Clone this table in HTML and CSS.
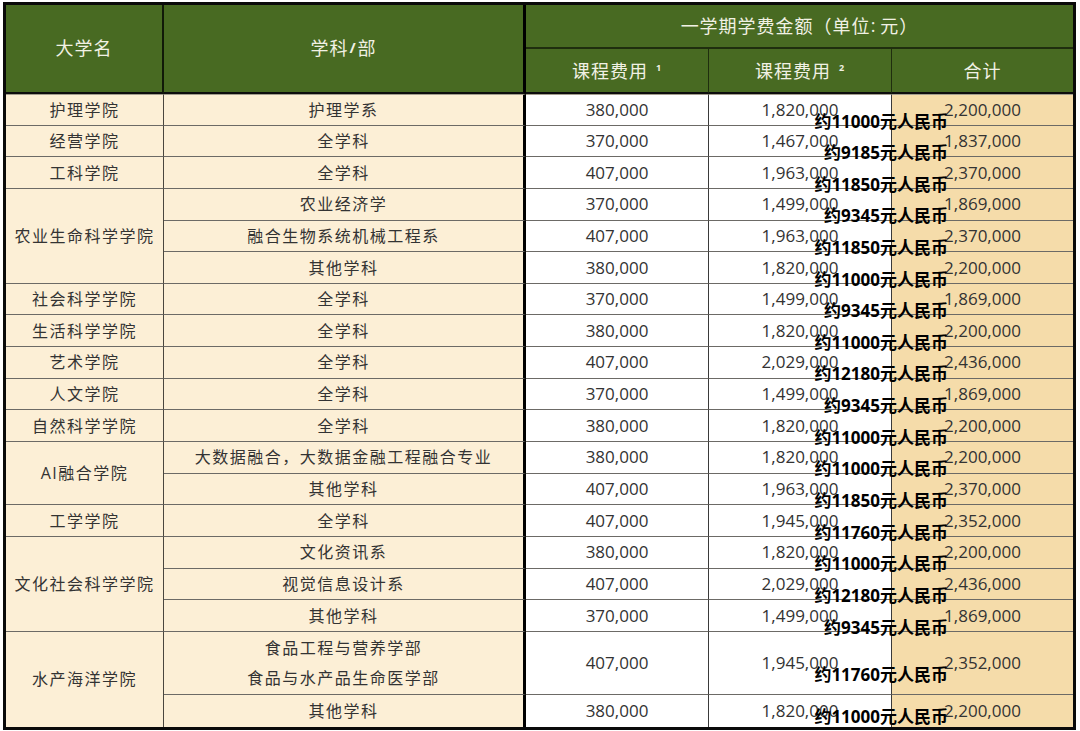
FILE: index.html
```html
<!DOCTYPE html>
<html lang="zh">
<head>
<meta charset="utf-8">
<title>一学期学费金额</title>
<link rel="stylesheet" href="styles.css">
</head>
<body>
<div class="fees">
  <div class="h h-col1 span2r">大学名</div>
  <div class="h h-col2 span2r">学科<span class="slash">/</span>部</div>
  <div class="h h-group">一学期学费金额（单位<span class="colon">:</span> 元）</div>
  <div class="h h-sub">课程费用<sup>1</sup></div>
  <div class="h h-sub">课程费用<sup>2</sup></div>
  <div class="h h-sub last">合计</div>

  <div class="c col1 r1">护理学院</div>
  <div class="c col2 r1">护理学系</div>
  <div class="c col3 r1">380,000</div>
  <div class="c col4 r1">1,820,000<span class="cny">约11000元人民币</span></div>
  <div class="c col5 r1">2,200,000</div>

  <div class="c col1">经营学院</div>
  <div class="c col2">全学科</div>
  <div class="c col3">370,000</div>
  <div class="c col4">1,467,000<span class="cny">约9185元人民币</span></div>
  <div class="c col5">1,837,000</div>

  <div class="c col1">工科学院</div>
  <div class="c col2">全学科</div>
  <div class="c col3">407,000</div>
  <div class="c col4">1,963,000<span class="cny">约11850元人民币</span></div>
  <div class="c col5">2,370,000</div>

  <div class="c col1 span3">农业生命科学学院</div>
  <div class="c col2">农业经济学</div>
  <div class="c col3">370,000</div>
  <div class="c col4">1,499,000<span class="cny">约9345元人民币</span></div>
  <div class="c col5">1,869,000</div>
  <div class="c col2">融合生物系统机械工程系</div>
  <div class="c col3">407,000</div>
  <div class="c col4">1,963,000<span class="cny">约11850元人民币</span></div>
  <div class="c col5">2,370,000</div>
  <div class="c col2">其他学科</div>
  <div class="c col3">380,000</div>
  <div class="c col4">1,820,000<span class="cny">约11000元人民币</span></div>
  <div class="c col5">2,200,000</div>

  <div class="c col1">社会科学学院</div>
  <div class="c col2">全学科</div>
  <div class="c col3">370,000</div>
  <div class="c col4">1,499,000<span class="cny">约9345元人民币</span></div>
  <div class="c col5">1,869,000</div>

  <div class="c col1">生活科学学院</div>
  <div class="c col2">全学科</div>
  <div class="c col3">380,000</div>
  <div class="c col4">1,820,000<span class="cny">约11000元人民币</span></div>
  <div class="c col5">2,200,000</div>

  <div class="c col1">艺术学院</div>
  <div class="c col2">全学科</div>
  <div class="c col3">407,000</div>
  <div class="c col4">2,029,000<span class="cny">约12180元人民币</span></div>
  <div class="c col5">2,436,000</div>

  <div class="c col1">人文学院</div>
  <div class="c col2">全学科</div>
  <div class="c col3">370,000</div>
  <div class="c col4">1,499,000<span class="cny">约9345元人民币</span></div>
  <div class="c col5">1,869,000</div>

  <div class="c col1">自然科学学院</div>
  <div class="c col2">全学科</div>
  <div class="c col3">380,000</div>
  <div class="c col4">1,820,000<span class="cny">约11000元人民币</span></div>
  <div class="c col5">2,200,000</div>

  <div class="c col1 span2">AI融合学院</div>
  <div class="c col2">大数据融合，大数据金融工程融合专业</div>
  <div class="c col3">380,000</div>
  <div class="c col4">1,820,000<span class="cny">约11000元人民币</span></div>
  <div class="c col5">2,200,000</div>
  <div class="c col2">其他学科</div>
  <div class="c col3">407,000</div>
  <div class="c col4">1,963,000<span class="cny">约11850元人民币</span></div>
  <div class="c col5">2,370,000</div>

  <div class="c col1">工学学院</div>
  <div class="c col2">全学科</div>
  <div class="c col3">407,000</div>
  <div class="c col4">1,945,000<span class="cny">约11760元人民币</span></div>
  <div class="c col5">2,352,000</div>

  <div class="c col1 span3">文化社会科学学院</div>
  <div class="c col2">文化资讯系</div>
  <div class="c col3">380,000</div>
  <div class="c col4">1,820,000<span class="cny">约11000元人民币</span></div>
  <div class="c col5">2,200,000</div>
  <div class="c col2">视觉信息设计系</div>
  <div class="c col3">407,000</div>
  <div class="c col4">2,029,000<span class="cny">约12180元人民币</span></div>
  <div class="c col5">2,436,000</div>
  <div class="c col2">其他学科</div>
  <div class="c col3">370,000</div>
  <div class="c col4">1,499,000<span class="cny">约9345元人民币</span></div>
  <div class="c col5">1,869,000</div>

  <div class="c col1 span3 lastrow">水产海洋学院</div>
  <div class="c col2 span2 two">食品工程与营养学部<br>食品与水产品生命医学部</div>
  <div class="c col3 span2">407,000</div>
  <div class="c col4 span2">1,945,000<span class="cny">约11760元人民币</span></div>
  <div class="c col5 span2">2,352,000</div>
  <div class="c col2 lastrow">其他学科</div>
  <div class="c col3 lastrow">380,000</div>
  <div class="c col4 lastrow">1,820,000<span class="cny up">约11000元人民币</span></div>
  <div class="c col5 lastrow">2,200,000</div>
</div>
</body>
</html>
```

FILE: styles.css
```css
html, body {
  margin: 0;
  padding: 0;
  background: #ffffff;
}

body {
  padding: 2px 4px 0 3px;
  font-family: "Open Sans", "Noto Sans CJK SC", sans-serif;
  color: #333333;
}

.fees {
  display: grid;
  grid-template-columns: 158px 362px 183px 183px 181px;
  grid-template-rows: 44px 45px repeat(20, 31.65px);
  width: 1067px;
  border: 3px solid #0a0a0a;
}

.fees > div {
  box-sizing: border-box;
  display: flex;
  align-items: center;
  justify-content: center;
  text-align: center;
  white-space: nowrap;
}

/* header */
.h {
  background: #486a22;
  color: #f1f1e4;
  font-size: 18px;
  letter-spacing: 1px;
  border-bottom: 2px solid #0d0d0d;
}

.span2r {
  grid-row: span 2;
  padding-bottom: 3px;
}

.h-col1 {
  border-right: 2px solid #111a08;
}

.h-col2 {
  border-right: 3px solid #000000;
}

.h-group {
  grid-column: span 3;
  border-bottom: 2px solid #1f2e0e;
  padding-bottom: 2px;
}

.h-sub {
  border-right: 1px solid #1f2e0e;
  padding-bottom: 1px;
}

.h-sub.last {
  border-right: 0;
}

.slash {
  font-weight: 700;
  font-size: 15px;
  margin: 0 1px;
}

.colon {
  margin-right: 4px;
}

sup {
  font-size: 9px;
  font-weight: 700;
  margin-left: 8px;
  position: relative;
  top: -3px;
}

/* body cells */
.c {
  font-size: 17px;
  border-bottom: 1px solid #6c6a66;
  line-height: 20px;
}

.col1, .col2 {
  background: #fcefd6;
  font-size: 16px;
  letter-spacing: 1.5px;
}

.col1 {
  grid-column: 1;
  border-right: 1px solid #4a463e;
}

.col2 {
  grid-column: 2;
  border-right: 3px solid #000000;
}

.col3 {
  background: #ffffff;
  border-right: 1px solid #3a3a3a;
}

.col4 {
  background: #ffffff;
  border-right: 1px solid #3a3a3a;
  position: relative;
}

.col5 {
  background: #f5dcaa;
}

.r1 {
  border-top: 1px solid #a39d8e;
}

.span2 {
  grid-row: span 2;
}

.span3 {
  grid-row: span 3;
}

.two {
  line-height: 30px;
}

.lastrow {
  border-bottom: 0;
}

.cny {
  position: absolute;
  z-index: 1;
  right: -57px;
  top: calc(50% + 2px);
  font-size: 17px;
  font-weight: 700;
  color: #000000;
  line-height: 20px;
  letter-spacing: 0;
}

.cny.up {
  top: calc(50% - 4px);
}
```
